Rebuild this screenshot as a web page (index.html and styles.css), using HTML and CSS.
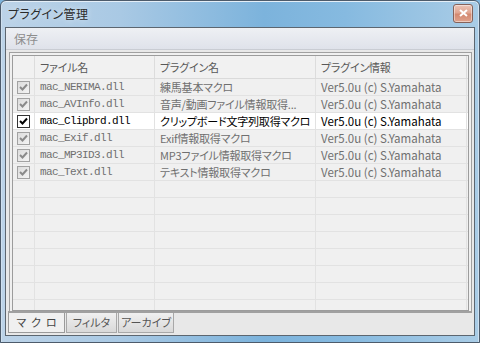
FILE: index.html
```html
<!DOCTYPE html>
<html lang="ja">
<head>
<meta charset="utf-8">
<title>プラグイン管理</title>
<link rel="stylesheet" href="styles.css">
</head>
<body>
<div class="window">
  <div class="titlebar">
    <span class="title">プラグイン管理</span>
    <div class="close">
      <svg width="9" height="8" viewBox="0 0 9 8"><path d="M1 1 L8 7 M8 1 L1 7" stroke="#fff" stroke-width="2" fill="none"/></svg>
    </div>
  </div>
  <div class="client">
    <div class="menubar"><span class="menu-item">保存</span></div>
    <div class="content">
      <div class="tabpage">
        <div class="listview">
          <div class="row header">
            <div class="cell chk"></div>
            <div class="cell">ファイル名</div>
            <div class="cell">プラグイン名</div>
            <div class="cell">プラグイン情報</div>
          </div>
          <div class="row">
            <div class="cell chk"><span class="box"><svg viewBox="0 0 11 11"><path d="M2 5 L4.5 7.5 L9 2.5"/></svg></span></div>
            <div class="cell mono">mac_NERIMA.dll</div>
            <div class="cell">練馬基本マクロ</div>
            <div class="cell lat">Ver5.0u (c) S.Yamahata</div>
          </div>
          <div class="row">
            <div class="cell chk"><span class="box"><svg viewBox="0 0 11 11"><path d="M2 5 L4.5 7.5 L9 2.5"/></svg></span></div>
            <div class="cell mono">mac_AVInfo.dll</div>
            <div class="cell">音声/動画ファイル情報取得...</div>
            <div class="cell lat">Ver5.0u (c) S.Yamahata</div>
          </div>
          <div class="row sel">
            <div class="cell chk"><span class="box"><svg viewBox="0 0 11 11"><path d="M2 5 L4.5 7.5 L9 2.5"/></svg></span></div>
            <div class="cell mono">mac_Clipbrd.dll</div>
            <div class="cell">クリップボード文字列取得マクロ</div>
            <div class="cell lat">Ver5.0u (c) S.Yamahata</div>
          </div>
          <div class="row">
            <div class="cell chk"><span class="box"><svg viewBox="0 0 11 11"><path d="M2 5 L4.5 7.5 L9 2.5"/></svg></span></div>
            <div class="cell mono">mac_Exif.dll</div>
            <div class="cell">Exif情報取得マクロ</div>
            <div class="cell lat">Ver5.0u (c) S.Yamahata</div>
          </div>
          <div class="row">
            <div class="cell chk"><span class="box"><svg viewBox="0 0 11 11"><path d="M2 5 L4.5 7.5 L9 2.5"/></svg></span></div>
            <div class="cell mono">mac_MP3ID3.dll</div>
            <div class="cell">MP3ファイル情報取得マクロ</div>
            <div class="cell lat">Ver5.0u (c) S.Yamahata</div>
          </div>
          <div class="row">
            <div class="cell chk"><span class="box"><svg viewBox="0 0 11 11"><path d="M2 5 L4.5 7.5 L9 2.5"/></svg></span></div>
            <div class="cell mono">mac_Text.dll</div>
            <div class="cell">テキスト情報取得マクロ</div>
            <div class="cell lat">Ver5.0u (c) S.Yamahata</div>
          </div>
          <div class="row empty"><div class="cell chk"></div><div class="cell"></div><div class="cell"></div><div class="cell"></div></div>
          <div class="row empty"><div class="cell chk"></div><div class="cell"></div><div class="cell"></div><div class="cell"></div></div>
          <div class="row empty"><div class="cell chk"></div><div class="cell"></div><div class="cell"></div><div class="cell"></div></div>
          <div class="row empty"><div class="cell chk"></div><div class="cell"></div><div class="cell"></div><div class="cell"></div></div>
          <div class="row empty"><div class="cell chk"></div><div class="cell"></div><div class="cell"></div><div class="cell"></div></div>
          <div class="row empty"><div class="cell chk"></div><div class="cell"></div><div class="cell"></div><div class="cell"></div></div>
          <div class="row empty"><div class="cell chk"></div><div class="cell"></div><div class="cell"></div><div class="cell"></div></div>
          <div class="row empty"><div class="cell chk"></div><div class="cell"></div><div class="cell"></div><div class="cell"></div></div>
        </div>
      </div>
      <div class="tabs">
        <div class="tab active">マクロ</div>
        <div class="tab">フィルタ</div>
        <div class="tab wide">アーカイブ</div>
      </div>
    </div>
  </div>
</div>
</body>
</html>
```
FILE: styles.css
```css
* { box-sizing: border-box; margin: 0; padding: 0; }
html, body { width: 480px; height: 343px; overflow: hidden; }
body {
  font-family: "Noto Sans CJK JP", sans-serif;
  font-size: 11px;
  font-weight: 400;
  font-feature-settings: "palt";
  background: #7db3dc;
}
.window {
  width: 480px;
  height: 343px;
  display: flex;
  flex-direction: column;
  border: 1px solid #4d5b6b;
  border-radius: 6px 6px 0 0;
  background: linear-gradient(90deg, #bcd3e8 0%, #a9c9e4 25%, #7cb3dc 55%, #86bae0 72%, #a9cce6 100%);
  padding: 0 4px 6px 4px;
  box-shadow: inset 0 1px 0 #e4eef7, inset 1px 0 0 #cfe0ef, inset -1px 0 0 #cfe0ef;
}
.titlebar {
  height: 26px;
  flex: none;
  display: flex;
  align-items: center;
  justify-content: space-between;
  padding: 0 2px 0 3px;
}
.title {
  color: #2a2a2a;
  font-size: 12px;
  line-height: 14px;
  text-shadow: 0 0 6px rgba(255,255,255,0.7);
  letter-spacing: 0.4px;
}
.close {
  width: 20px;
  height: 19px;
  margin-top: -2px;
  border: 1px solid #86625a;
  border-radius: 3px;
  background: linear-gradient(#ecc4b7 0%, #e0a591 45%, #d38870 55%, #dfa28c 100%);
  box-shadow: inset 0 0 0 1px rgba(255,255,255,0.45);
  display: flex;
  align-items: center;
  justify-content: center;
}
.client {
  flex: 1;
  min-height: 0;
  display: flex;
  flex-direction: column;
  border: 1px solid #5c6670;
  background: #f0f0f0;
}
.menubar {
  height: 22px;
  flex: none;
  background: linear-gradient(#eef0f4, #dfe2ea);
  border-bottom: 1px solid #c9ccd3;
  padding-left: 8px;
  display: flex;
  align-items: center;
}
.menu-item { color: #8d8d8d; font-size: 12px; }
.content {
  flex: 1;
  min-height: 0;
  display: flex;
  flex-direction: column;
  padding: 2px 2px 2px 3px;
  background: #e8e8e8;
}
.tabpage {
  flex: 1;
  min-height: 0;
  border: 1px solid #a0a0a0;
  border-bottom: none;
  padding: 2px 2px 0 2px;
  background: #f0f0f0;
  display: flex;
}
.listview {
  flex: 1;
  min-height: 0;
  border: 1px solid #9c9c9c;
  background: #f0f0f0;
  overflow: hidden;
}
.row {
  display: grid;
  grid-template-columns: 22px 120px 161px 151px;
  height: 17px;
  border-bottom: 1px solid #e2e2e2;
}
.row .cell {
  border-right: 1px solid #e2e2e2;
  padding-left: 5px;
  white-space: nowrap;
  overflow: hidden;
  line-height: 16px;
  color: #6f6f6f;
  letter-spacing: -0.2px;
}
.row.header { height: 23px; border-bottom: 1px solid #dadada; background: #f1f1f1; }
.row.header .cell { line-height: 22px; color: #585858; border-right-color: #dcdcdc; }
.row .cell.chk { padding-left: 4px; display: flex; align-items: center; }
.row .cell.mono {
  font-family: "Liberation Mono", monospace;
  font-size: 11px;
  letter-spacing: -0.6px;
}
.row .cell.lat { font-size: 11.5px; letter-spacing: 0; }
.box {
  width: 13px;
  height: 13px;
  border: 1px solid #a2a2a2;
  background: linear-gradient(135deg, #dcdcdc, #f4f4f4);
  display: block;
}
.box svg { width: 11px; height: 11px; display: block; }
.box path { stroke: #8a8a8a; stroke-width: 2; fill: none; }
.row.sel { background: #fff; }
.row.sel .cell { color: #000; }
.row.sel .box { border-color: #333; background: #fff; }
.row.sel .box path { stroke: #000; }
.tabs {
  height: 22px;
  flex: none;
  display: flex;
  align-items: flex-start;
  border-top: 2px solid #a0a0a0;
  margin-left: -1px;
}
.tab {
  height: 20px;
  width: 51px;
  color: #555;
  line-height: 19px;
  border: 1px solid #a8a8a8;
  border-top: none;
  background: linear-gradient(#f0f0f0, #d9d9d9);
  margin-right: 1px;
  text-align: center;
  white-space: nowrap;
}
.tab.wide { width: 56px; }
.tab.active {
  width: 57px;
  background: #f0f0f0;
  letter-spacing: 5px;
  padding-left: 5px;
  color: #444;
  border-color: #9a9a9a;
}
```
